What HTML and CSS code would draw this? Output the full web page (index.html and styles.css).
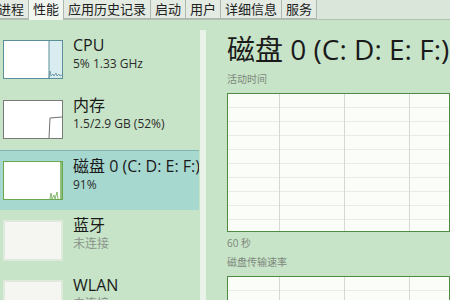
FILE: index.html
```html
<!DOCTYPE html>
<html lang="zh-CN">
<head>
    <meta charset="UTF-8">
    <title>任务管理器 - 性能</title>
    <link rel="stylesheet" href="styles.css">
</head>
<body>

    <div class="tabs">
        <div class="tab first">进程</div>
        <div class="tab active">性能</div>
        <div class="tab">应用历史记录</div>
        <div class="tab">启动</div>
        <div class="tab">用户</div>
        <div class="tab">详细信息</div>
        <div class="tab">服务</div>
    </div>

    <div class="main">
        <div class="side">
            <div class="items">
                <div class="item">
                    <svg class="thumb cpu" viewBox="0 0 58 37" preserveAspectRatio="none">
                        <rect x="45" y="0" width="13" height="37" fill="#d9edf1"/>
                        <line x1="45" y1="0" x2="45" y2="37" stroke="#5c8e99" stroke-width="1"/>
                        <polyline points="45,37 46,30 47,35 49,33 50,35 52,32 53,35 55,33 56,35 58,34" fill="none" stroke="#5c8e99" stroke-width="0.8"/>
                    </svg>
                    <div class="info">
                        <div class="name">CPU</div>
                        <div class="sub">5% 1.33 GHz</div>
                    </div>
                </div>
                <div class="item">
                    <svg class="thumb mem" viewBox="0 0 58 37" preserveAspectRatio="none">
                        <polyline points="45,37 46,17 58,16" fill="none" stroke="#6f6f6f" stroke-width="1"/>
                    </svg>
                    <div class="info">
                        <div class="name">内存</div>
                        <div class="sub">1.5/2.9 GB (52%)</div>
                    </div>
                </div>
                <div class="item selected">
                    <svg class="thumb disk" viewBox="0 0 58 37" preserveAspectRatio="none">
                        <polyline points="46,37 47,31 48,37 50,33 51,37 53,30 54,37" fill="none" stroke="#6aa84f" stroke-width="0.8"/>
                        <line x1="57" y1="0" x2="57" y2="37" stroke="#6aa84f" stroke-width="1.5"/>
                    </svg>
                    <div class="info">
                        <div class="name">磁盘 0 (C: D: E: F:)</div>
                        <div class="sub">91%</div>
                    </div>
                </div>
                <div class="item">
                    <div class="thumb blank"></div>
                    <div class="info">
                        <div class="name">蓝牙</div>
                        <div class="sub muted">未连接</div>
                    </div>
                </div>
                <div class="item">
                    <div class="thumb blank"></div>
                    <div class="info">
                        <div class="name">WLAN</div>
                        <div class="sub muted">未连接</div>
                    </div>
                </div>
            </div>
            <div class="scroll"></div>
        </div>

        <div class="detail">
            <h1>磁盘 0 (C: D: E: F:)</h1>
            <div class="label">活动时间</div>
            <div class="chart big"></div>
            <div class="label axis">60 秒</div>
            <div class="label">磁盘传输速率</div>
            <div class="chart"></div>
        </div>
    </div>

</body>
</html>
```

FILE: styles.css
```css
body {
    margin: 0;
    width: 450px;
    height: 300px;
    overflow: hidden;
    background-color: #c8e4c8;
    color: #1a1a1a;
    font-family: "Open Sans", "Noto Sans CJK SC", sans-serif;
}
.tabs {
    display: flex;
    height: 19px;
    margin-left: -6px;
    border-bottom: 1px solid #b3bfb3;
    background-color: #d9e6d9;
}
.tab {
    padding: 0 4px;
    height: 18px;
    line-height: 18px;
    font-size: 13px;
    color: #222;
    background-color: #e3ebe2;
    border: 1px solid #aeb8ae;
    border-top: none;
    border-left: none;
    white-space: nowrap;
}
.tab.active {
    height: 20px;
    background-color: #f1f6f0;
    border-bottom: none;
}
.main {
    display: flex;
    height: 280px;
}
.side {
    display: flex;
    width: 207px;
    padding-top: 10px;
}
.items {
    width: 199px;
    overflow: hidden;
}
.item {
    display: flex;
    gap: 10px;
    height: 60px;
    padding-left: 3px;
    box-sizing: border-box;
}
.item.selected {
    background-color: #a7d8d0;
    border-top: 1px solid #7fb5b0;
}
.thumb {
    flex: none;
    width: 60px;
    height: 39px;
    margin-top: 10px;
    box-sizing: border-box;
    background-color: #ffffff;
}
.thumb.cpu {
    border: 1px solid #5c8e99;
}
.thumb.mem {
    border: 1px solid #7a7a7a;
}
.thumb.disk {
    border: 1px solid #6aa84f;
}
.thumb.blank {
    height: 41px;
    border: 2px solid #e0eadc;
    background-color: #f5f5f1;
}
.info {
    padding-top: 5px;
    white-space: nowrap;
}
.name {
    font-size: 16px;
    line-height: 21px;
}
.sub {
    font-size: 12px;
    line-height: 16px;
    color: #2b2b2b;
}
.sub.muted {
    color: #8a948a;
}
.scroll {
    width: 6px;
    margin-left: 1px;
    background-color: #e9f3e9;
}
.detail {
    flex: 1;
    padding-left: 20px;
    overflow: hidden;
}
h1 {
    margin: 13px 0 0;
    font-size: 28px;
    font-weight: normal;
    line-height: 32px;
    white-space: nowrap;
}
.label {
    font-size: 10px;
    line-height: 12px;
    color: #7d887d;
    white-space: nowrap;
}
h1 + .label {
    margin-top: 8px;
}
.chart {
    height: 60px;
    margin-top: 8px;
    border: 1px solid #4f8a43;
    background-color: #fbfdf9;
    background-image:
        linear-gradient(to right, #d6d9d2 1px, transparent 1px),
        linear-gradient(to bottom, #e8ece5 1px, transparent 1px);
    background-size: 65px 100%, 100% 14px;
    background-position: 51px 0, 0 13px;
}
.chart.big {
    height: 137px;
}
.label.axis {
    margin: 5px 0 7px;
}
```
